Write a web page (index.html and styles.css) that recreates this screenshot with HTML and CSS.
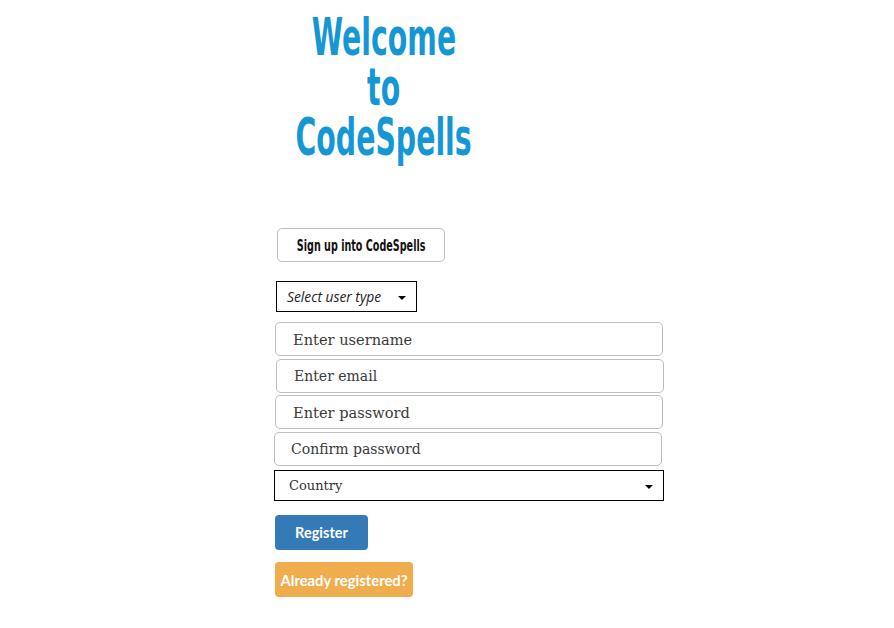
FILE: index.html
```html
<!DOCTYPE html>
<html>
<head>
<meta charset="utf-8">
<link rel="stylesheet" href="styles.css">
</head>
<body>
<main class="page">
  <h1 class="title"><span>Welcome</span><span>to</span><span>CodeSpells</span></h1>
  <div class="signup-wrap"><button class="signup"><span>Sign up into CodeSpells</span></button></div>
  <div class="select select-type"><span class="select-text">Select user type</span><span class="caret"></span></div>
  <form class="fields">
    <div class="field f1">Enter username</div>
    <div class="field f2 small">Enter email</div>
    <div class="field f3">Enter password</div>
    <div class="field f4 small">Confirm password</div>
    <div class="select country"><span class="country-text">Country</span><span class="caret"></span></div>
  </form>
  <div class="actions">
    <button class="btn btn-primary" type="button">Register</button>
    <button class="btn btn-warning" type="button">Already registered?</button>
  </div>
</main>
</body>
</html>
```
FILE: styles.css
```css
html, body { margin: 0; padding: 0; background: #fff; }
.page { padding-left: 274px; width: 390px; }
.title {
  margin: 0; padding-top: 17px;
  width: 220px; text-align: center;
  font-family: "DejaVu Sans", sans-serif;
  font-weight: 700; font-size: 44px; line-height: 42px;
  color: #1597d5;
  display: flex; flex-direction: column; align-items: center; gap: 8px;
}
.title span { display: block; white-space: nowrap; transform: scale(0.645, 1.16); }
.signup-wrap { margin-top: 69px; padding-left: 3px; }
.signup {
  width: 168px; height: 34px; box-sizing: border-box;
  background: #fff; border: 1px solid #bdbdbd; border-radius: 5px;
  font-family: "DejaVu Sans", sans-serif;
  font-weight: 700; font-size: 16px; color: #111; padding: 0;
  display: flex; align-items: center; justify-content: center; overflow: visible;
}
.signup span { display: block; white-space: nowrap; transform: scaleX(0.6); }
.select {
  box-sizing: border-box; border: 1px solid #000; background: #fff;
  display: flex; align-items: center; justify-content: space-between;
}
.select-type {
  margin-top: 19px; margin-left: 2px; width: 141px; height: 31px;
  padding: 0 10px 0 10px;
  font-family: "Open Sans", sans-serif; font-style: italic; font-size: 13.8px; color: #222;
}
.caret {
  width: 0; height: 0; border-left: 4px solid transparent; border-right: 4px solid transparent;
  border-top: 4px solid #000; margin-top: 3px;
}
.fields { display: flex; flex-direction: column; margin-top: 10px; }
.field {
  box-sizing: border-box; height: 34px; width: 388px;
  border: 1px solid #bdbdbd; border-radius: 5px;
  font-family: "DejaVu Serif", serif; font-size: 14.6px; color: #3a3a3a;
  display: flex; align-items: center; padding-left: 17px;
  margin-bottom: 2.5px;
}
.field.small { font-size: 14px; }
.f1 { margin-left: 1px; }
.f2 { margin-left: 2px; }
.f3 { margin-left: 1px; }
.f4 { margin-left: 0; padding-left: 16px; }
.country {
  margin-top: 2px; width: 390px; height: 31px; padding: 0 10px 0 14px;
  font-family: "DejaVu Serif", serif; font-size: 13px; color: #333;
}
.actions { display: flex; flex-direction: column; align-items: flex-start; margin-top: 14px; padding-left: 1px; gap: 12px; }
.btn {
  border: none; border-radius: 4px; color: #fff; height: 35px; padding: 0;
  font-family: Lato, sans-serif; font-weight: 700; font-size: 14.5px;
}
.btn-primary { background: #337ab7; width: 93px; }
.btn-warning { background: #f0ad4e; width: 138px; font-size: 14.8px; }
```
